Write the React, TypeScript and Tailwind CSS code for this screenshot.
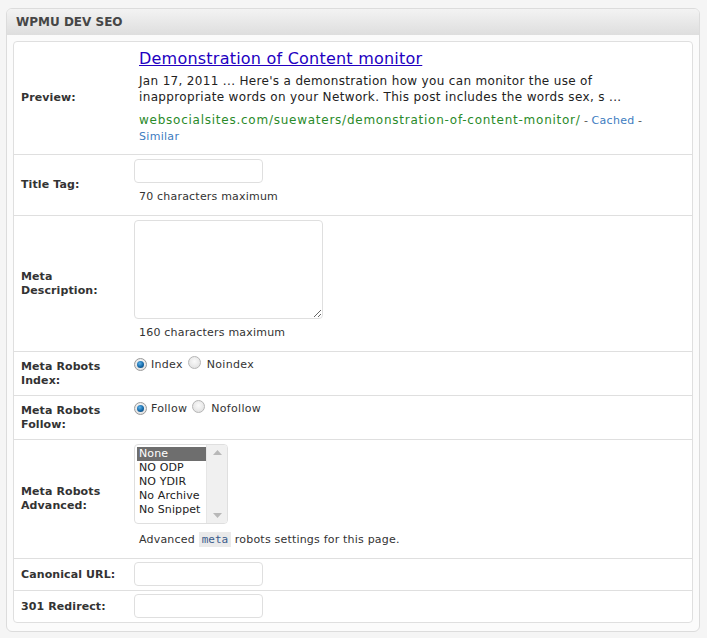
import React from "react";

const font = "font-['DejaVu_Sans','Verdana',sans-serif]";

function Radio({ checked }: { checked: boolean }) {
  return checked ? (
    <span className="inline-flex w-[13px] h-[13px] rounded-full border border-[#9a9a9a] bg-[radial-gradient(circle_at_50%_40%,#ffffff,#d8d8d8)] items-center justify-center shrink-0">
      <span className="w-[7px] h-[7px] rounded-full bg-[radial-gradient(circle_at_40%_35%,#5fb3ea,#1468a8_55%,#0a3c66)]" />
    </span>
  ) : (
    <span className="inline-block w-[13px] h-[13px] rounded-full border border-[#b5b5b5] bg-[radial-gradient(circle_at_50%_40%,#fafafa,#dcdcdc)] shrink-0" />
  );
}

function Row({
  label,
  h,
  last,
  children,
}: {
  label: React.ReactNode;
  h: string;
  last?: boolean;
  children: React.ReactNode;
}) {
  return (
    <div className={`flex ${h} ${last ? "" : "border-b border-[#dfdfdf]"}`}>
      <div className="w-[120px] shrink-0 pl-[7px] flex items-center text-[11px] leading-[14px] font-bold text-[#333] tracking-[0.1px]">
        {label}
      </div>
      <div className="flex-1 flex flex-col items-start">{children}</div>
    </div>
  );
}

export default function App() {
  return (
    <div className={`w-[707px] h-[638px] bg-[#f5f5f5] pt-[8px] pl-[6px] ${font}`}>
      <div className="w-[694px] h-[624px] border border-[#dcdcdc] rounded-[6px] bg-[#fbfbfb] overflow-hidden">
        <div className="h-[26px] bg-[linear-gradient(#f3f3f3,#dedede)] flex items-center pl-[9px]">
          <span className="text-[12px] font-bold text-[#464646]">WPMU DEV SEO</span>
        </div>
        <div className="pt-[6px] pl-[6px]">
          <div className="w-[680px] h-[582px] border border-[#dfdfdf] rounded-[4px] bg-white overflow-hidden">
            <Row label="Preview:" h="h-[113px]">
              <div className="pl-[5px] pt-[7px]">
                <div className="text-[16px] leading-[20px] text-[#2200c1] underline whitespace-nowrap tracking-[0.22px]">
                  Demonstration of Content monitor
                </div>
                <div className="mt-[4px] text-[12px] leading-[16px] text-[#222] whitespace-nowrap tracking-[0.33px]">
                  Jan 17, 2011 ... Here's a demonstration how you can monitor the use of
                </div>
                <div className="text-[12px] leading-[16px] text-[#222] whitespace-nowrap tracking-[0.35px]">
                  inappropriate words on your Network. This post includes the words sex, s ...
                </div>
                <div className="mt-[7px] text-[12px] leading-[16px] whitespace-nowrap">
                  <span className="text-[#2a8a2a] tracking-[0.75px]">websocialsites.com/suewaters/demonstration-of-content-monitor/</span>
                  <span className="text-[11px] text-[#555]"> - </span>
                  <span className="text-[11px] text-[#3d7cbf] tracking-[0.3px]">Cached</span>
                  <span className="text-[11px] text-[#555]"> -</span>
                </div>
                <div className="text-[11px] leading-[16px] text-[#3d7cbf] tracking-[0.3px]">Similar</div>
              </div>
            </Row>
            <Row label="Title Tag:" h="h-[61px]">
              <div className="pt-[4px]">
                <div className="w-[129px] h-[24px] border border-[#dfdfdf] rounded-[4px] bg-white" />
              </div>
              <div className="pl-[5px] mt-[7px] text-[11px] leading-[14px] text-[#333] tracking-[0.2px]">70 characters maximum</div>
            </Row>
            <Row
              label={
                <span>
                  Meta
                  <br />
                  Description:
                </span>
              }
              h="h-[136px]"
            >
              <div className="pt-[4px]">
                <textarea className="block w-[189px] h-[99px] border border-[#dfdfdf] rounded-[4px] bg-white resize outline-none" />
              </div>
              <div className="pl-[5px] mt-[7px] text-[11px] leading-[14px] text-[#333] tracking-[0.2px]">160 characters maximum</div>
            </Row>
            <Row
              label={
                <span>
                  Meta Robots
                  <br />
                  Index:
                </span>
              }
              h="h-[44px]"
            >
              <div className="pt-[4px] flex items-center text-[11px] leading-[13px] text-[#333] tracking-[0.3px]">
                <Radio checked />
                <span className="ml-[4px]">Index</span>
                <span className="ml-[5px]">
                  <Radio checked={false} />
                </span>
                <span className="ml-[6px]">Noindex</span>
              </div>
            </Row>
            <Row
              label={
                <span>
                  Meta Robots
                  <br />
                  Follow:
                </span>
              }
              h="h-[44px]"
            >
              <div className="pt-[4px] flex items-center text-[11px] leading-[13px] text-[#333] tracking-[0.3px]">
                <Radio checked />
                <span className="ml-[4px]">Follow</span>
                <span className="ml-[5px]">
                  <Radio checked={false} />
                </span>
                <span className="ml-[6px]">Nofollow</span>
              </div>
            </Row>
            <Row
              label={
                <span>
                  Meta Robots
                  <br />
                  Advanced:
                </span>
              }
              h="h-[119px]"
            >
              <div className="pt-[4px]">
                <div className="w-[94px] h-[80px] border border-[#dfdfdf] rounded-[4px] bg-white flex overflow-hidden">
                  <div className="w-[71px] pt-[2px] pl-[2px] text-[11px] leading-[14px] text-[#222] tracking-[0.1px]">
                    <div className="bg-[#6e6e6e] text-white pl-[2px]">None</div>
                    <div className="pl-[2px]">NO ODP</div>
                    <div className="pl-[2px]">NO YDIR</div>
                    <div className="pl-[2px] whitespace-nowrap">No Archive</div>
                    <div className="pl-[2px] whitespace-nowrap">No Snippet</div>
                  </div>
                  <div className="flex-1 bg-[#f0f0f0] border-l border-[#e6e6e6] flex flex-col items-center justify-between py-[5px]">
                    <svg width="9" height="5" viewBox="0 0 9 5">
                      <path d="M0 5 L4.5 0 L9 5 Z" fill="#b8b8b8" />
                    </svg>
                    <svg width="9" height="5" viewBox="0 0 9 5">
                      <path d="M0 0 L4.5 5 L9 0 Z" fill="#b8b8b8" />
                    </svg>
                  </div>
                </div>
              </div>
              <div className="pl-[5px] mt-[9px] text-[11px] leading-[14px] text-[#333] whitespace-nowrap tracking-[0.2px]">
                Advanced{" "}
                <code className="bg-[#eaeaea] px-[3px] py-[1px] font-['DejaVu_Sans_Mono',monospace] text-[11px] text-[#3a5a8a] tracking-normal">
                  meta
                </code>{" "}
                robots settings for this page.
              </div>
            </Row>
            <Row label="Canonical URL:" h="h-[32px]">
              <div className="pt-[3px]">
                <div className="w-[129px] h-[24px] border border-[#dfdfdf] rounded-[4px] bg-white" />
              </div>
            </Row>
            <Row label="301 Redirect:" h="h-[31px]" last>
              <div className="pt-[3px]">
                <div className="w-[129px] h-[24px] border border-[#dfdfdf] rounded-[4px] bg-white" />
              </div>
            </Row>
          </div>
        </div>
      </div>
    </div>
  );
}
